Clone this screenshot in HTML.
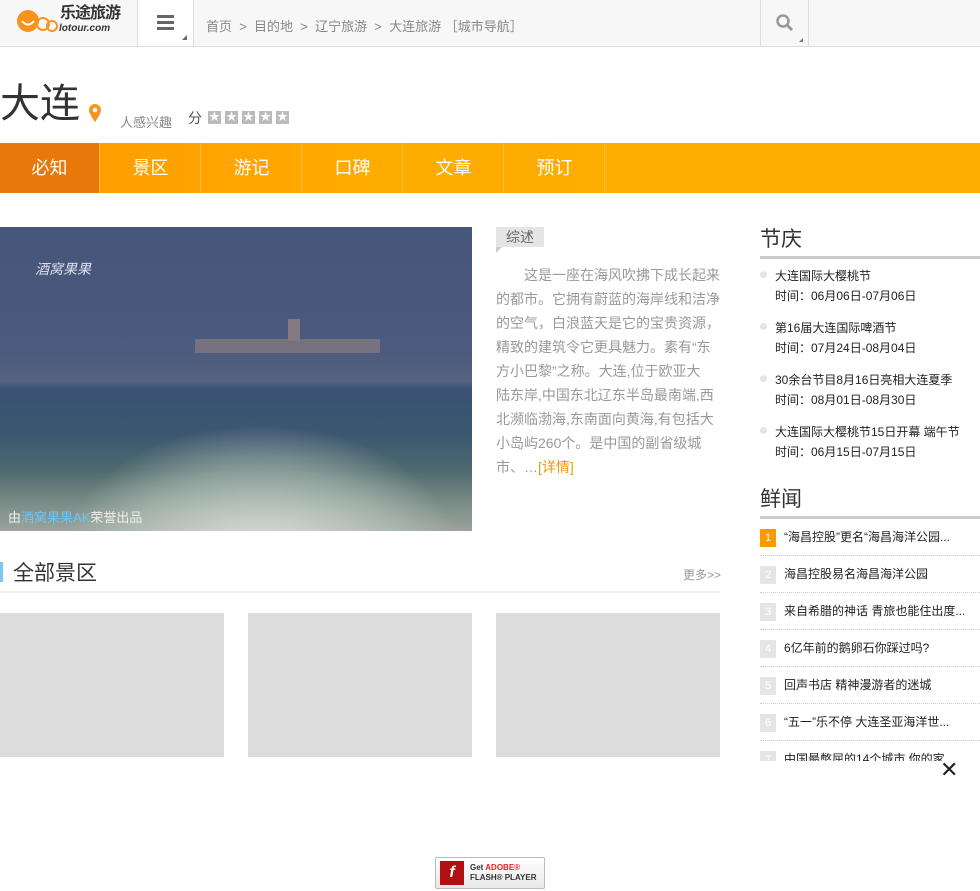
<!DOCTYPE html>
<html><head><meta charset="utf-8">
<style>
*{margin:0;padding:0;box-sizing:border-box}
body{width:980px;height:891px;position:relative;overflow:hidden;background:#fff;font-family:"Liberation Sans","Noto Sans CJK SC",sans-serif;color:#333}
.a{position:absolute}
.hdr{left:0;top:0;width:980px;height:47px;background:#f7f7f7;border-bottom:1px solid #ddd}
.bc{left:206px;top:16px;font-size:13px;color:#888;white-space:nowrap}
.nav{left:0;top:143px;width:980px;height:50px;background:linear-gradient(90deg,#ff9a00,#ffac00 40%,#ffae00)}
.tab{position:absolute;top:0;height:50px;width:100px;color:#fff;font-size:18px;text-align:center;line-height:50px;border-right:1px solid #ffbe40}
.sum{left:496px;top:263px;width:240px;font-size:14px;line-height:24px;color:#999;white-space:nowrap}
.h2{font-size:21px;color:#333}
.fi{left:760px;width:220px;font-size:12px;line-height:20px;color:#222}
.fi i{position:absolute;left:0;top:5px;width:7px;height:7px;border-radius:50%;background:#e5e5e5}
.fi div{padding-left:15px}
.ni{left:760px;width:220px;height:37px;border-bottom:1px dotted #ccc;font-size:12px;color:#222;line-height:18px;white-space:nowrap;overflow:hidden}
.ni b{display:inline-block;width:16px;height:18px;background:#e5e5e5;color:#fff;font-weight:normal;text-align:center;font-size:11px;margin-right:8px}
.gb{top:613px;width:224px;height:144px;background:#dcdcdc}
</style></head><body>
<div class="a hdr"></div>
<svg class="a" style="left:14px;top:5px" width="46" height="32"><circle cx="14" cy="16" r="11" fill="#f7931e"/><path d="M8 16 q6 7 12 0" stroke="#fff" stroke-width="2" fill="none"/><circle cx="29" cy="19" r="6" fill="none" stroke="#f7931e" stroke-width="2"/><circle cx="38" cy="21" r="5" fill="none" stroke="#f7931e" stroke-width="2"/></svg>
<div class="a" style="left:60px;top:5px;font-size:16px;color:#333;font-weight:bold;letter-spacing:-1px;line-height:18px">乐途旅游</div>
<div class="a" style="left:59px;top:23px;font-size:10px;color:#333;font-weight:bold;font-style:italic;line-height:11px">lotour.com</div>
<div class="a" style="left:137px;top:0;width:57px;height:46px;background:#fff;border-left:1px solid #ddd;border-right:1px solid #ddd"></div>
<div class="a" style="left:157px;top:15px;width:17px;height:3px;background:#666;box-shadow:0 6px 0 #666,0 12px 0 #666"></div>
<div class="a" style="left:182px;top:35px;width:0;height:0;border-left:5px solid transparent;border-bottom:5px solid #666"></div>
<div class="a bc">首页 &nbsp;&gt;&nbsp; 目的地 &nbsp;&gt;&nbsp; 辽宁旅游 &nbsp;&gt;&nbsp; 大连旅游 ［城市导航］</div>
<div class="a" style="left:760px;top:0;width:49px;height:46px;border-left:1px solid #ddd;border-right:1px solid #ddd"></div>
<svg class="a" style="left:775px;top:13px" width="20" height="20"><circle cx="8" cy="8" r="5.5" fill="none" stroke="#999" stroke-width="2.5"/><path d="M12 12 L17 17" stroke="#999" stroke-width="3"/></svg>
<div class="a" style="left:799px;top:38px;border-left:4px solid transparent;border-bottom:4px solid #777"></div>

<div class="a" style="left:0;top:80px;font-size:40px;color:#333;line-height:48px">大连</div>
<svg class="a" style="left:88px;top:104px" width="14" height="18"><path d="M7 0 a6 6 0 0 1 6 6 c0 4-6 12-6 12 s-6-8-6-12 a6 6 0 0 1 6-6z" fill="#f7931e"/><circle cx="7" cy="6" r="2.3" fill="#fff"/></svg>
<div class="a" style="left:120px;top:112px;font-size:13px;color:#888">人感兴趣</div>
<div class="a" style="left:188px;top:108px;font-size:14px;color:#555">分</div>
<div class="a" style="left:208px;top:111px;font-size:11px;color:#fff;line-height:13px;white-space:nowrap"><span style="display:inline-block;width:13px;height:13px;background:#bbb;text-align:center;margin-right:4px">★</span><span style="display:inline-block;width:13px;height:13px;background:#bbb;text-align:center;margin-right:4px">★</span><span style="display:inline-block;width:13px;height:13px;background:#bbb;text-align:center;margin-right:4px">★</span><span style="display:inline-block;width:13px;height:13px;background:#bbb;text-align:center;margin-right:4px">★</span><span style="display:inline-block;width:13px;height:13px;background:#bbb;text-align:center">★</span></div>

<div class="a nav">
<div class="tab" style="left:0;background:#e8780a">必知</div>
<div class="tab" style="left:101px">景区</div>
<div class="tab" style="left:202px">游记</div>
<div class="tab" style="left:303px">口碑</div>
<div class="tab" style="left:404px">文章</div>
<div class="tab" style="left:505px">预订</div>
</div>

<div class="a" style="left:0;top:227px;width:472px;height:304px;background:linear-gradient(180deg,#46557a 0%,#4b5a7e 40%,#55637f 51%,#3a5273 53%,#3c5670 68%,#4e6a6e 80%,#7f8f8a 92%,#9aa39c 100%);overflow:hidden">
<div class="a" style="left:60px;top:200px;width:400px;height:140px;background:radial-gradient(ellipse at 50% 100%,rgba(235,240,235,.85),rgba(200,212,200,.45) 50%,transparent 72%)"></div>
<div class="a" style="left:195px;top:112px;width:185px;height:14px;background:#77707e"></div>
<div class="a" style="left:288px;top:92px;width:12px;height:22px;background:#857a82"></div>
<div class="a" style="left:35px;top:32px;font-size:14px;color:#dde;font-style:italic">酒窝果果</div>
<div class="a" style="left:8px;top:280px;font-size:13px;color:#eee">由<span style="color:#6cc6f5">酒窝果果AK</span>荣誉出品</div>
</div>

<div class="a" style="left:496px;top:227px;width:48px;height:20px;background:#e5e5e5;font-size:14px;color:#666;text-align:center;line-height:20px">综述</div>
<div class="a" style="left:496px;top:247px;border-right:6px solid transparent;border-top:6px solid #ccc"></div>
<div class="a sum">　　这是一座在海风吹拂下成长起来<br>的都市。它拥有蔚蓝的海岸线和洁净<br>的空气，白浪蓝天是它的宝贵资源，<br>精致的建筑令它更具魅力。素有“东<br>方小巴黎”之称。大连,位于欧亚大<br>陆东岸,中国东北辽东半岛最南端,西<br>北濒临渤海,东南面向黄海,有包括大<br>小岛屿260个。是中国的副省级城<br>市、…<span style="color:#f39800">[详情]</span></div>

<div class="a" style="left:0;top:562px;width:3px;height:20px;background:#7cc8f2"></div>
<div class="a h2" style="left:13px;top:557px">全部景区</div>
<div class="a" style="left:683px;top:566px;font-size:12px;color:#999">更多&gt;&gt;</div>
<div class="a" style="left:0;top:591px;width:720px;height:2px;background:#eee"></div>
<div class="a gb" style="left:0"></div>
<div class="a gb" style="left:248px"></div>
<div class="a gb" style="left:496px"></div>

<div class="a h2" style="left:760px;top:223px">节庆</div>
<div class="a" style="left:760px;top:256px;width:220px;height:3px;background:#ccc"></div>
<div class="a fi" style="top:266px"><i></i><div>大连国际大樱桃节<br>时间：06月06日-07月06日</div></div>
<div class="a fi" style="top:318px"><i></i><div>第16届大连国际啤酒节<br>时间：07月24日-08月04日</div></div>
<div class="a fi" style="top:370px"><i></i><div>30余台节目8月16日亮相大连夏季<br>时间：08月01日-08月30日</div></div>
<div class="a fi" style="top:422px"><i></i><div>大连国际大樱桃节15日开幕 端午节<br>时间：06月15日-07月15日</div></div>

<div class="a h2" style="left:760px;top:483px">鲜闻</div>
<div class="a" style="left:760px;top:516px;width:220px;height:3px;background:#ccc"></div>
<div class="a ni" style="top:519px;padding-top:9px"><b style="background:#f90">1</b>“海昌控股”更名“海昌海洋公园...</div>
<div class="a ni" style="top:556px;padding-top:9px"><b>2</b>海昌控股易名海昌海洋公园</div>
<div class="a ni" style="top:593px;padding-top:9px"><b>3</b>来自希腊的神话 青旅也能住出度...</div>
<div class="a ni" style="top:630px;padding-top:9px"><b>4</b>6亿年前的鹅卵石你踩过吗?</div>
<div class="a ni" style="top:667px;padding-top:9px"><b>5</b>回声书店 精神漫游者的迷城</div>
<div class="a ni" style="top:704px;padding-top:9px"><b>6</b>“五一”乐不停 大连圣亚海洋世...</div>
<div class="a ni" style="top:741px;padding-top:9px;height:20px;border:0"><b>7</b>中国最憋屈的14个城市 你的家</div>
<div class="a" style="left:940px;top:758px;font-size:22px;color:#222;line-height:24px">✕</div>

<div class="a" style="left:435px;top:857px;width:110px;height:32px;background:linear-gradient(#fff,#e8e8e8);border:1px solid #bbb;border-radius:2px">
<div class="a" style="left:4px;top:3px;width:24px;height:24px;background:#b01010;color:#fff;font-style:italic;font-weight:bold;text-align:center;line-height:24px;font-size:16px">f</div>
<div class="a" style="left:34px;top:5px;font-size:8px;font-weight:bold;color:#333;line-height:10px">Get <span style="color:#e22">ADOBE®</span><br>FLASH® PLAYER</div>
</div>
</body></html>
